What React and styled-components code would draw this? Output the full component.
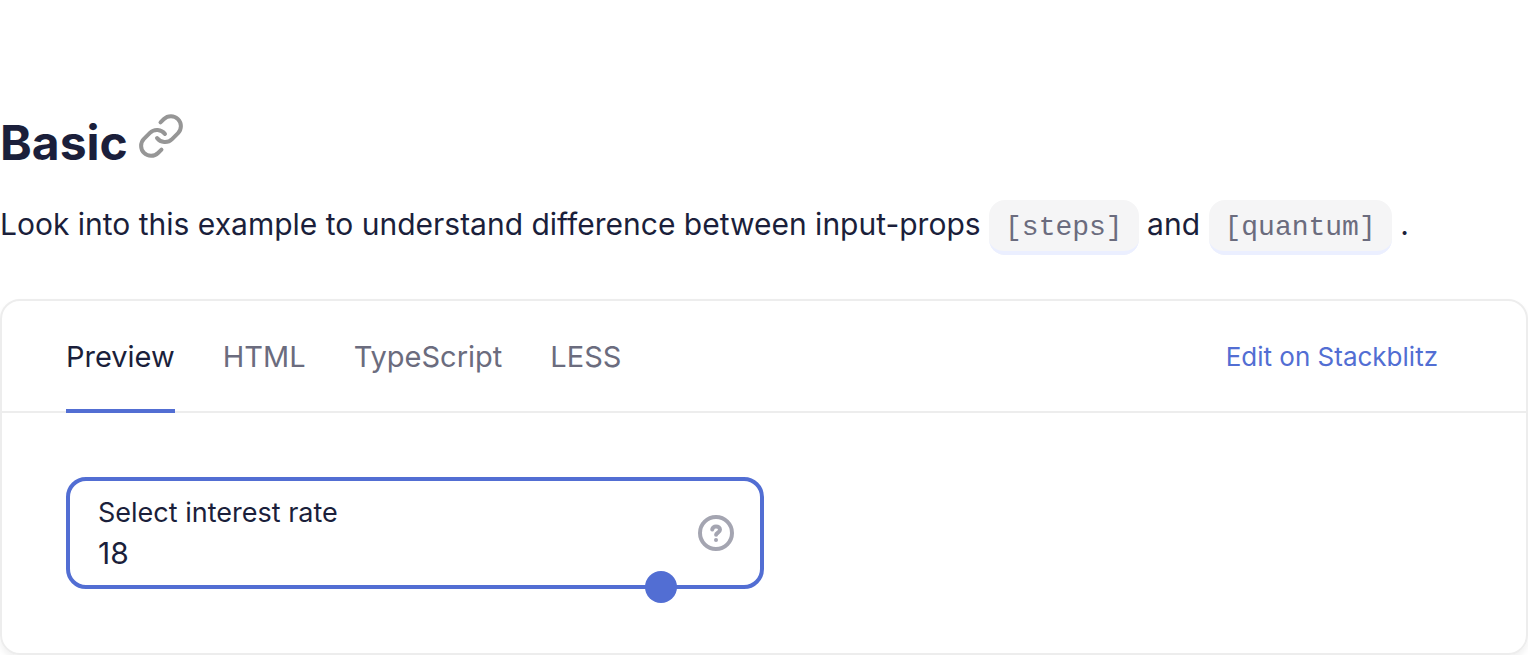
import React, { useState } from "react";
import styled, { createGlobalStyle } from "styled-components";
import { Link as LinkIcon } from "lucide-react";

const ink = "#1b1f3b";
const muted = "#6b6c7e";
const accent = "#526ed3";
const line = "#ededed";

const GlobalStyle = createGlobalStyle`
  *, *::before, *::after { box-sizing: border-box; }
  body {
    margin: 0;
    background: #fff;
    color: ${ink};
    font-family: Inter, "Liberation Sans", sans-serif;
    overflow-x: hidden;
  }
  button, input { font: inherit; color: inherit; }
`;

const Page = styled.main`
  padding-top: 112px;
`;

const Heading = styled.h2`
  display: flex;
  align-items: flex-start;
  gap: 9px;
  margin: 0;
  font-size: 48px;
  font-weight: 700;
  line-height: 62px;
`;

const Anchor = styled.a`
  display: flex;
  color: #969696;
`;

const Description = styled.p`
  margin: 20px 0 45px;
  font-size: 30px;
  line-height: 60px;
`;

const Code = styled.code`
  padding: 12px 16px 8px;
  border-bottom: 4px solid #ebefff;
  border-radius: 16px;
  background: #f5f5f6;
  color: ${muted};
  font-family: "Liberation Mono", monospace;
  font-size: 28px;
  line-height: 1;
`;

const Card = styled.section`
  border: 2px solid ${line};
  border-radius: 20px;
  box-shadow: 0 4px 6px rgba(0, 0, 0, 0.06);
`;

const CardHeader = styled.header`
  display: flex;
  align-items: stretch;
  justify-content: space-between;
  height: 112px;
  padding: 2px 88px 0 64px;
  border-bottom: 2px solid ${line};
`;

const Tabs = styled.div`
  display: flex;
  gap: 48px;
  margin-bottom: -2px;
`;

const Tab = styled.button`
  padding: 2px 0 0;
  border: 0;
  border-bottom: 4px solid ${(p) => (p.$active ? accent : "transparent")};
  background: none;
  color: ${(p) => (p.$active ? ink : muted)};
  font-size: 29px;
  line-height: 40px;
  cursor: pointer;
`;

const EditLink = styled.a`
  align-self: center;
  color: ${accent};
  font-size: 26px;
  line-height: 40px;
  text-decoration: none;
`;

const Content = styled.div`
  padding: 64px;
`;

const Field = styled.div`
  position: relative;
  display: flex;
  align-items: center;
  justify-content: space-between;
  width: 50%;
  height: 112px;
  padding: 0 26px 0 28px;
  border: 4px solid ${accent};
  border-radius: 20px;
`;

const FieldText = styled.div`
  display: flex;
  flex: 1;
  flex-direction: column;
`;

const Label = styled.label`
  font-size: 27px;
  line-height: 40px;
`;

const ValueInput = styled.input`
  width: 100%;
  height: 40px;
  padding: 0;
  border: 0;
  outline: 0;
  background: none;
  font-size: 30px;
`;

const HelpButton = styled.button`
  display: flex;
  padding: 0;
  border: 0;
  background: none;
  color: #a4a5b1;
  cursor: pointer;
`;

const Slider = styled.input`
  position: absolute;
  right: -4px;
  bottom: -18px;
  left: -4px;
  height: 32px;
  margin: 0;
  appearance: none;
  background: none;
  cursor: pointer;

  &::-webkit-slider-thumb {
    width: 32px;
    height: 32px;
    border: 0;
    border-radius: 50%;
    appearance: none;
    background: ${accent};
  }
`;

function HelpIcon() {
  return (
    <svg width="36" height="36" viewBox="0 0 36 36" fill="none" stroke="currentColor" strokeWidth="4" aria-hidden="true">
      <circle cx="18" cy="18" r="16" />
      <path d="M14.200 14.500c.5-2 2-3 3.800-3 2.300 0 4 1.300 4 3.300 0 2.700-3.900 3-3.900 4.900" strokeLinecap="round" strokeLinejoin="round" />
      <circle cx="18" cy="24.900" r="2" fill="currentColor" stroke="none" />
    </svg>
  );
}

const tabs = ["Preview", "HTML", "TypeScript", "LESS"];

export default function App() {
  const [active, setActive] = useState("Preview");
  const [rate, setRate] = useState("18");
  const changeRate = (event) => setRate(event.target.value);

  return (
    <>
      <GlobalStyle />
      <Page>
        <Heading id="basic">
          Basic
          <Anchor href="#basic" aria-label="Link to Basic">
            <LinkIcon size={48} />
          </Anchor>
        </Heading>
        <Description>
          Look into this example to understand difference between input-props <Code>[steps]</Code> and{" "}
          <Code>[quantum]</Code> .
        </Description>
        <Card>
          <CardHeader>
            <Tabs role="tablist">
              {tabs.map((tab) => (
                <Tab
                  key={tab}
                  type="button"
                  role="tab"
                  aria-selected={tab === active}
                  $active={tab === active}
                  onClick={() => setActive(tab)}
                >
                  {tab}
                </Tab>
              ))}
            </Tabs>
            <EditLink href="#stackblitz">Edit on Stackblitz</EditLink>
          </CardHeader>
          <Content>
            <Field>
              <FieldText>
                <Label htmlFor="rate">Select interest rate</Label>
                <ValueInput id="rate" type="text" inputMode="decimal" value={rate} onChange={changeRate} />
              </FieldText>
              <HelpButton type="button" aria-label="Help">
                <HelpIcon />
              </HelpButton>
              <Slider
                type="range"
                aria-label="Select interest rate"
                min="8"
                max="19.5"
                step="0.5"
                value={rate}
                onChange={changeRate}
              />
            </Field>
          </Content>
        </Card>
      </Page>
    </>
  );
}
